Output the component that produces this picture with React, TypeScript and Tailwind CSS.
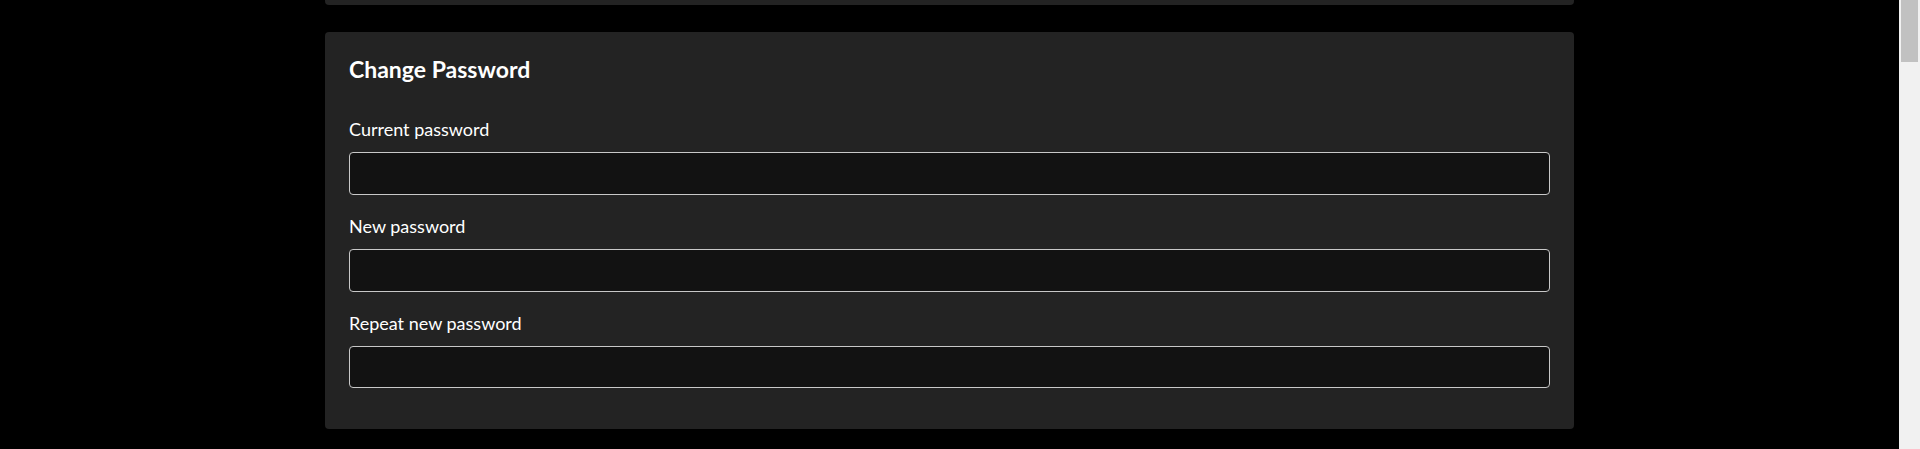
import React from "react";

const Field = ({ label }: { label: string }) => (
  <div className="mb-[18px]">
    <label className="block text-[18px] leading-[27px] mb-[9px] text-white">{label}</label>
    <input
      type="password"
      className="block w-full h-[42.75px] rounded-[4px] border border-[#c8c8c8] bg-[#121212] px-3 text-white outline-none"
    />
  </div>
);

export default function App() {
  return (
    <div className="flex h-[449px] w-full overflow-hidden bg-black" style={{ fontFamily: "Lato, 'Open Sans', sans-serif" }}>
      <div className="flex-1 min-w-0">
        <div className="mx-auto w-[1249px]">
          <div className="h-[5px] rounded-b-[4px] bg-[#232323] shadow-[0_0_6px_rgba(0,0,0,0.6)]" />
          <div className="mt-[27px] rounded-[4px] bg-[#232323] px-[24px] pt-[24px] pb-[23px] shadow-[0_0_6px_rgba(0,0,0,0.6)]">
            <h5 className="text-[23px] leading-[27px] font-bold text-white mb-[33px]">Change Password</h5>
            <Field label="Current password" />
            <Field label="New password" />
            <Field label="Repeat new password" />
          </div>
        </div>
      </div>
      <div className="w-[21px] shrink-0 bg-[#f1f1f1] pl-[2px] pr-[2px]">
        <div className="h-[62px] w-[17px] bg-[#c1c1c1]" />
      </div>
    </div>
  );
}
